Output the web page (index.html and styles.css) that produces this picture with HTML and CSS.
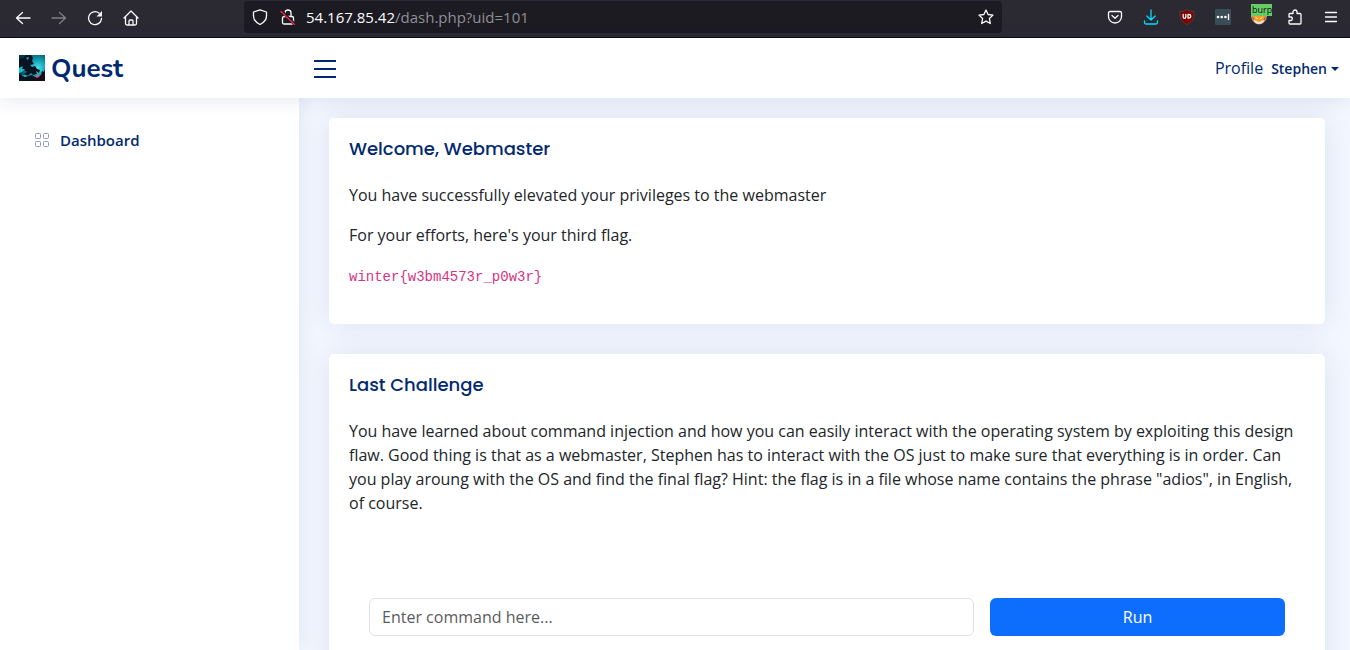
FILE: index.html
```html
<!DOCTYPE html>
<html lang="en">
<head>
<meta charset="utf-8">
<title>Quest - Dashboard</title>
<link rel="stylesheet" href="styles.css">
</head>
<body>
<div class="toolbar">
  <div class="nav-tools">
    <button class="tool" aria-label="Back"><svg viewBox="0 0 16 16"><path d="M15 8H1.5M7.5 2.5 1.5 8l6 5.500"/></svg></button>
    <button class="tool tool-off" aria-label="Forward"><svg viewBox="0 0 16 16"><path d="M1 8h13.500M8.500 2.500l6 5.500-6 5.500"/></svg></button>
    <button class="tool" aria-label="Reload"><svg viewBox="0 0 16 16"><path d="M14.500 8.500A6.500 6.500 0 1 1 12 3"/><path class="solid" d="M15 1v5.500H9.500z"/></svg></button>
    <button class="tool" aria-label="Home"><svg viewBox="0 0 16 16"><path d="M1 8l7-7 7 7M2.500 7v6.500a1.500 1.500 0 0 0 1.500 1.500h8a1.500 1.500 0 0 0 1.500-1.500V7M6 15v-4a1 1 0 0 1 1-1h2a1 1 0 0 1 1 1v4"/></svg></button>
  </div>
  <div class="address">
    <svg class="icon" viewBox="0 0 16 16"><path d="M8 .8 14.500 3v4c0 3.800-2.500 6.500-6.500 8.500C4 13.500 1.500 10.800 1.500 7V3z"/></svg>
    <svg class="icon" viewBox="0 0 16 16"><path d="M5 7V4a3 3 0 0 1 3-3 3 3 0 0 1 3 3v3M4 7.500h8a1.500 1.500 0 0 1 1.500 1.500v4.500A1.500 1.500 0 0 1 12 15H4a1.500 1.500 0 0 1-1.500-1.500V9A1.500 1.500 0 0 1 4 7.500z"/><path class="slash-gap" d="M2 2.500 15 15.500"/><path class="slash" d="M1 2.500 14.500 15.500"/></svg>
    <span class="url"><span class="host">54.167.85.42</span>/dash.php?uid=101</span>
    <button class="tool" aria-label="Bookmark"><svg viewBox="0 0 16 16"><path d="M8 1l2.100 4.500 4.900.6-3.600 3.400.9 5L8 12.100 3.700 14.500l.9-5L1 6.100l4.900-.6z"/></svg></button>
  </div>
  <div class="ext-tools">
    <button class="tool" aria-label="Pocket"><svg viewBox="0 0 16 16"><path d="M3 2.500h10A1.500 1.500 0 0 1 14.500 4v3.500a6.500 6.500 0 0 1-13 0V4A1.500 1.500 0 0 1 3 2.500zM5 6.500l3 2.700 3-2.700"/></svg></button>
    <button class="tool tool-dl" aria-label="Downloads"><svg viewBox="0 0 16 16"><path d="M8 1v10M3.800 7 8 11l4.200-4M1.500 12v1.500A1.500 1.500 0 0 0 3 15h10a1.500 1.500 0 0 0 1.500-1.500V12"/></svg></button>
    <button class="tool" aria-label="uBlock Origin"><svg viewBox="0 0 16 16"><path d="M8 .5c2 1.500 4 2 7 2 0 7-1 10-7 13-6-3-7-6-7-13 3 0 5-.5 7-2z" fill="#800000" stroke="#54464b" stroke-width=".7"/><path d="M4.200 5.500v2.500a1.200 1.200 0 0 0 2.600 0M6.800 5.500v2.500M9 5.500v3.600h1a1.800 1.800 0 0 0 0-3.600h-1"/></svg></button>
    <button class="tool" aria-label="Password manager"><svg viewBox="0 0 16 16"><rect x="0" y="0" width="16" height="16" rx="1" fill="#3b4d57" stroke="none"/><g fill="#fff" stroke="none"><circle cx="3" cy="8" r="1.300"/><circle cx="6.700" cy="8" r="1.300"/><circle cx="10.400" cy="8" r="1.300"/></g><path d="M13.500 5.500v5"/></svg></button>
    <button class="tool proxy" aria-label="FoxyProxy"><svg viewBox="0 0 16 16"><path d="M.5 7h15a7.500 8 0 0 1-15 0z" fill="#b9653a" stroke="#c9bdb5" stroke-width=".7"/><path d="M2 7h12l-2 5-4 1-4-1z" fill="#ff9a1f" stroke="none"/><path d="M2.500 11c2 0 3 1 5.500 2 2.500-1 3.500-2 5.500-2-1 2.500-3 4-5.500 4s-4.500-1.500-5.500-4z" fill="#f3e3d3" stroke="none"/><path d="M5 8.500l1.500 1M11 8.500l-1.500 1" stroke="#fff" stroke-width="1"/></svg><span class="proxy-tag">burp</span></button>
    <button class="tool" aria-label="Extensions"><svg viewBox="0 0 16 16"><path d="M3 4.500h3V3a2 2 0 0 1 4 0v1.500h3a1 1 0 0 1 1 1V14a1 1 0 0 1-1 1H3a1 1 0 0 1-1-1v-2.500h2a1.800 1.800 0 0 0 0-3.500H2V5.500a1 1 0 0 1 1-1z"/></svg></button>
    <button class="tool" aria-label="Menu"><svg viewBox="0 0 16 16"><path d="M2.500 3.500h11M2.500 8h11M2.500 12.500h11"/></svg></button>
  </div>
</div>

<header class="header">
  <div class="brand">
    <a class="logo" href="#">
      <svg class="logo-art" viewBox="0 0 26 26" aria-hidden="true">
        <defs>
          <radialGradient id="glow" cx=".72" cy=".5" r=".75"><stop offset="0" stop-color="#4fe0ea"/><stop offset=".4" stop-color="#10a3b5"/><stop offset="1" stop-color="#053543"/></radialGradient>
        </defs>
        <path fill="url(#glow)" d="M0 0h26v26H0z"/>
        <path fill="#0a1322" d="M0 4l4-1 3-3h5l2 3-1 3 2 3-4 1 2 2 3-1 2 3 3 1-1 3-3-2 1 3-4 1-2-2-4 3-3-2 3-2-3-2-4 2-1-2 4-3-4 1z"/>
        <path fill="#1cc0cb" d="M0 13l4-2-1 3 3 0-3 3-3 1zM7 3l3-1-1 3zM1 21l5-1 6 2-3 3-8 1z"/>
        <path fill="#0a1322" d="M0 19l6 3 7-2 3 2 5 1 5 3H0z"/>
        <path fill="#1a0a1c" d="M26 14l-1 3-2-1-1 4-5 3-5 3h14z"/>
        <path fill="#d9606c" d="M16 21l3-1 2 1-3 2z"/>
      </svg>
      <span>Quest</span>
    </a>
    <button class="burger" aria-label="Toggle sidebar"><svg viewBox="0 0 32 32"><path d="M5 9h22M5 17h22M5 25h22"/></svg></button>
  </div>
  <nav class="account">
    <a class="profile" href="#">Profile</a>
    <button class="user">Stephen<span class="caret"></span></button>
  </nav>
</header>

<div class="body">
  <aside class="sidebar">
    <a class="side-link" href="#">
      <svg viewBox="0 0 16 16"><g><rect x="1.500" y="1.500" width="5" height="5" rx="1"/><rect x="9.500" y="1.500" width="5" height="5" rx="1"/><rect x="1.500" y="9.500" width="5" height="5" rx="1"/><rect x="9.500" y="9.500" width="5" height="5" rx="1"/></g></svg>
      <span>Dashboard</span>
    </a>
  </aside>
  <main class="main">
    <section class="card">
      <h5 class="card-title">Welcome, Webmaster</h5>
      <p>You have successfully elevated your privileges to the webmaster</p>
      <p>For your efforts, here's your third flag.</p>
      <p><code>winter{w3bm4573r_p0w3r}</code></p>
    </section>
    <section class="card">
      <h5 class="card-title">Last Challenge</h5>
      <p>You have learned about command injection and how you can easily interact with the operating system by exploiting this design flaw. Good thing is that as a webmaster, Stephen has to interact with the OS just to make sure that everything is in order. Can you play aroung with the OS and find the final flag? Hint: the flag is in a file whose name contains the phrase "adios", in English, of course.</p>
      <form class="command">
        <input class="field" type="text" aria-label="Command" placeholder="Enter command here...">
        <button class="run" type="button">Run</button>
      </form>
    </section>
  </main>
</div>
</body>
</html>
```
FILE: styles.css
```css
* { box-sizing: border-box; }

body {
  margin: 0;
  height: 100vh;
  overflow: hidden;
  display: flex;
  flex-direction: column;
  background: #f3f7ff;
  color: #212529;
  font: 16px/24px "Open Sans", sans-serif;
}

button { font: inherit; border: 0; padding: 0; background: none; cursor: pointer; }
a { text-decoration: none; }

/* Browser toolbar */
.toolbar {
  flex: none;
  display: grid;
  grid-template-columns: 244px minmax(0, 758px) 1fr;
  align-items: start;
  height: 38px;
  background: #2b2a33;
  border-bottom: 1px solid #0c0c0d;
}
.nav-tools { display: flex; gap: 20px; padding: 10px 0 0 15px; }
.ext-tools { display: flex; gap: 20px; justify-content: flex-end; padding: 9px 11px 0 0; }
.tool, .icon { display: block; flex: none; width: 16px; height: 16px; }
.tool svg { display: block; width: 16px; height: 16px; }
.toolbar svg { fill: none; stroke: #fbfbfe; stroke-width: 1.3; stroke-linecap: round; stroke-linejoin: round; }
.toolbar .solid { fill: #fbfbfe; stroke: none; }
.toolbar .slash-gap { stroke: #1c1b22; stroke-width: 3; }
.toolbar .slash { stroke: #e22850; stroke-width: 1.4; }
.tool-off { opacity: .4; }
.toolbar .tool-dl svg { stroke: #00ddff; }
.address {
  display: flex;
  align-items: center;
  gap: 12px;
  height: 32px;
  margin-top: 1px;
  padding: 0 8px;
  border-radius: 4px;
  background: #1c1b22;
}
.url { flex: 1; margin-left: -2px; color: #8f8f97; font: 15px/20px "Open Sans", sans-serif; }
.host { color: #fbfbfe; }
.proxy { position: relative; }
.proxy-tag {
  position: absolute;
  top: -5px;
  left: 0;
  padding: 0 0 1px 1px;
  background: #66cc66;
  color: #111;
  font: 9px/11px "Open Sans", sans-serif;
}

/* Site header */
.header {
  position: relative;
  z-index: 2;
  flex: none;
  display: flex;
  justify-content: space-between;
  align-items: center;
  height: 60px;
  padding: 0 11px 0 19px;
  background: #fff;
  box-shadow: 0 2px 20px rgba(1, 41, 112, .1);
}
.brand { display: flex; align-items: center; }
.logo {
  display: flex;
  align-items: center;
  gap: 6px;
  width: 290px;
  color: #012970;
  font: 700 26px/30px Nunito, Lato, sans-serif;
}
.logo span { padding-top: 2px; }
.logo-art { width: 26px; height: 26px; }
.burger svg { display: block; width: 32px; height: 32px; fill: none; stroke: #012970; stroke-width: 2; }
.account { display: flex; align-items: baseline; gap: 8px; }
.profile { color: #012970; }
.user { display: flex; align-items: center; gap: 4px; color: #012970; font-size: 14px; font-weight: 600; }
.caret { border: 4px solid transparent; border-top-color: #012970; border-bottom: 0; }

/* Page body */
.body { flex: 1; min-height: 0; display: flex; }
.sidebar {
  flex: none;
  width: 299px;
  padding: 20px;
  background: #fff;
  box-shadow: 0 0 20px rgba(1, 41, 112, .1);
}
.side-link {
  display: flex;
  align-items: center;
  gap: 10px;
  padding: 10px 14px;
  color: #012970;
  font-size: 15px;
  font-weight: 600;
}
.side-link svg { width: 16px; height: 16px; fill: none; stroke: #899bbd; }
.main { flex: 1; min-width: 0; padding: 20px 25px 20px 30px; }
.card {
  margin-bottom: 30px;
  padding: 0 20px 27px;
  background: #fff;
  border-radius: 5px;
  box-shadow: 0 0 30px rgba(1, 41, 112, .1);
}
.card-title {
  margin: 0;
  padding: 20px 0 15px;
  color: #012970;
  font: 500 18px/22px Poppins, Inter, sans-serif;
}
.card p { margin: 0; padding: 8px 0; }
code { color: #d63384; font: 14px/24px "Liberation Mono", monospace; }
.command { display: grid; grid-template-columns: 605fr 295fr; gap: 16px; padding: 75px 20px 20px; }
.field, .run { width: 100%; height: 38px; border-radius: 6px; font: 16px/24px "Open Sans", sans-serif; }
.field { padding: 6px 12px; border: 1px solid #dee2e6; background: #fff; color: #212529; }
.field::placeholder { color: #595c5f; opacity: 1; }
.run { background: #0d6efd; color: #fff; }
```
